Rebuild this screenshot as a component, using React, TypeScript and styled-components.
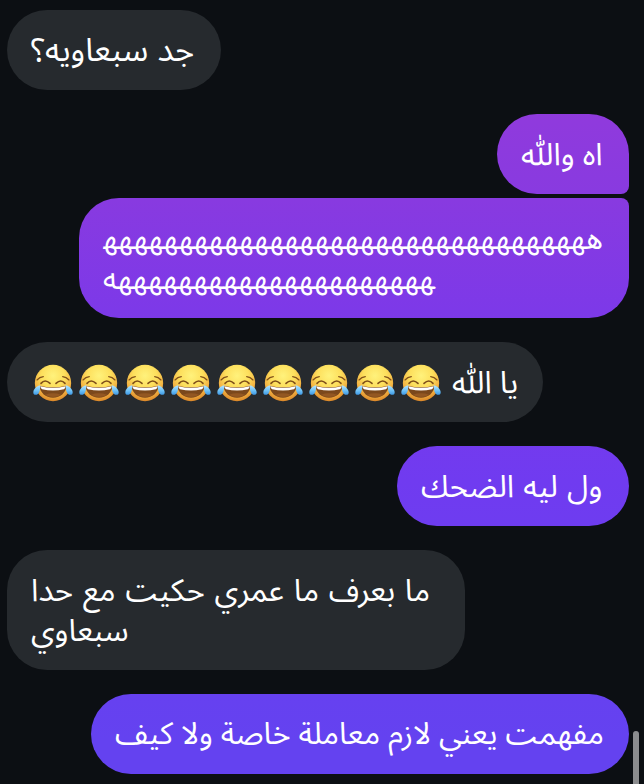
import React from 'react';
import styled, { createGlobalStyle } from 'styled-components';

const GlobalStyle = createGlobalStyle`
  body { margin: 0; background: #0c0f13; overflow: hidden; }
`;

const Screen = styled.main`
  position: relative;
  box-sizing: border-box;
  width: 644px;
  height: 784px;
  padding: 10px 15px 10px 7px;
  display: flex;
  flex-direction: column;
  gap: 24px;
  background: #0c0f13;
  overflow: hidden;
`;

const Group = styled.section<{ $sent?: boolean }>`
  display: flex;
  flex-direction: column;
  align-items: ${p => (p.$sent ? 'flex-end' : 'flex-start')};
  gap: 4px;
`;

const Bubble = styled.div<{ $sent?: boolean; $width: number; $join?: 'above' | 'below'; $drop?: number }>`
  box-sizing: border-box;
  width: ${p => p.$width}px;
  padding: ${p => 20 + (p.$drop ?? 0)}px 24px ${p => 20 - (p.$drop ?? 0)}px;
  color: #fff;
  border-radius: 40px;
  ${p => p.$join === 'below' && 'border-bottom-right-radius: 8px;'}
  ${p => p.$join === 'above' && 'border-top-right-radius: 8px;'}
  background: ${p =>
    p.$sent
      ? 'linear-gradient(#913adc 100px, #883ae0 200px, #7d39e8 310px, #703bf0 480px, #6442f0 740px) 0 0 / 644px 784px fixed'
      : '#262a2e'};
`;

const Line = styled.div<{ $size?: number; $space?: number }>`
  display: flex;
  align-items: center;
  direction: rtl;
  justify-content: flex-end;
  height: 40px;
  font: 400 ${p => p.$size ?? 31}px/40px 'Noto Sans Arabic', 'DejaVu Sans', sans-serif;
  word-spacing: ${p => p.$space ?? 0}px;
  white-space: nowrap;
`;

const Emojis = styled.span`
  display: flex;
  direction: ltr;
  gap: 6px;
  margin: 0 11px 0 2px;
`;

const Face = styled.svg`
  display: block;
  width: 40px;
  height: 38px;
`;

const ScrollThumb = styled.div`
  position: absolute;
  top: 731px;
  right: 5px;
  bottom: 0;
  width: 6px;
  border-radius: 3px 3px 0 0;
  background: #8b8c8e;
`;

const Joy = () => (
  <Face viewBox="0 0 120 114" role="img" aria-label="😂">
    <circle cx="60" cy="57" r="54.5" fill="url(#joy-face)" />
    <g fill="none" stroke="#80501a" strokeLinecap="round">
      <path d="M12 48Q20 39 31 38M108 48Q100 39 89 38" strokeWidth="3.5" />
      <path d="M24 58Q36 44 51 58M96 58Q84 44 69 58" strokeWidth="5" />
    </g>
    <path d="M19 65Q60 74 101 65C99 86 82 101 60 101S21 86 19 65Z" fill="#7b481c" />
    <path d="M22 67Q60 76 98 67Q97 73 93 76Q60 83 27 76Q23 73 22 67Z" fill="#fff" />
    <path d="M36 92Q60 84 84 92Q75 99 60 99T36 92Z" fill="#935722" />
    <path d="M22 64C11 66 2 75 1 84C0 91 6 94 12 92C20 89 22 75 22 64Z" fill="url(#joy-tear)" />
    <path d="M98 64C109 66 118 75 119 84C120 91 114 94 108 92C100 89 98 75 98 64Z" fill="url(#joy-tear)" />
  </Face>
);

const Defs = styled.svg`
  position: absolute;
  width: 0;
  height: 0;
`;

const ZWJ = '\u200d';
const heh = (n: number) => 'ه'.repeat(n);

export default function App() {
  return (
    <Screen>
      <GlobalStyle />
      <Defs aria-hidden="true">
        <defs>
          <radialGradient id="joy-face" cx=".5" cy=".3" r=".72">
            <stop offset="0" stopColor="#fff27c" />
            <stop offset=".45" stopColor="#fddf5c" />
            <stop offset=".75" stopColor="#f3b242" />
            <stop offset="1" stopColor="#d68025" />
          </radialGradient>
          <linearGradient id="joy-tear" x1="0" y1="0" x2="0" y2="1">
            <stop offset="0" stopColor="#b5e6ff" />
            <stop offset=".55" stopColor="#6fc2f7" />
            <stop offset="1" stopColor="#3c97e4" />
          </linearGradient>
        </defs>
      </Defs>
      <Group>
        <Bubble $width={214} $drop={1}><Line $size={32.5} $space={1}>جد سبعاويه؟</Line></Bubble>
      </Group>
      <Group $sent>
        <Bubble $sent $width={132} $join="below" $drop={1}><Line>اه واللّٰه</Line></Bubble>
        <Bubble $sent $width={550} $join="above" $drop={2}>
          <Line $size={29.75}>{heh(33) + ZWJ}</Line>
          <Line $size={29.75}>{ZWJ + heh(22)}</Line>
        </Bubble>
      </Group>
      <Group>
        <Bubble $width={536} $drop={1}>
          <Line>
            <span>يا اللّٰه</span>
            <Emojis>{Array.from({ length: 9 }, (_, i) => <Joy key={i} />)}</Emojis>
          </Line>
        </Bubble>
      </Group>
      <Group $sent>
        <Bubble $sent $width={232} $drop={1}><Line $space={1}>ول ليه الضحك</Line></Bubble>
      </Group>
      <Group>
        <Bubble $width={458} $drop={1}>
          <Line $space={1.7}>ما بعرف ما عمري حكيت مع حدا</Line>
          <Line>سبعاوي</Line>
        </Bubble>
      </Group>
      <Group $sent>
        <Bubble $sent $width={538} $drop={1}><Line $size={30.8}>مفهمت يعني لازم معاملة خاصة ولا كيف</Line></Bubble>
      </Group>
      <ScrollThumb />
    </Screen>
  );
}
